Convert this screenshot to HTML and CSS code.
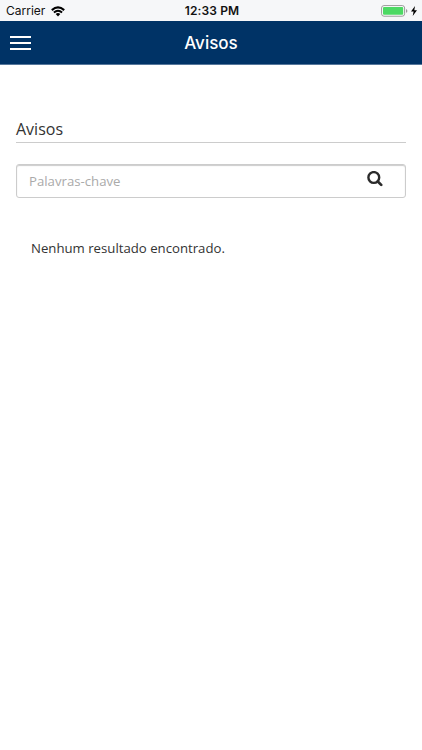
FILE: index.html
```html
<!DOCTYPE html>
<html lang="pt-BR">
<head>
  <meta charset="UTF-8" />
  <meta name="viewport" content="width=device-width, initial-scale=1.0"/>
  <title>Avisos</title>
  <link rel="stylesheet" href="styles.css">
</head>
<body>
  <div class="statusbar">
    <div class="carrier">
      <span>Carrier</span>
      <svg class="wifi" width="14" height="11" viewBox="0 0 14 11">
        <path d="M0.8 4.1 Q7 -1.3 13.2 4.1" fill="none" stroke="#000" stroke-width="2.1"/>
        <path d="M2.9 6.5 Q7 2.9 11.1 6.5" fill="none" stroke="#000" stroke-width="1.9"/>
        <path d="M4.7 8.1 Q7 6.1 9.3 8.1 L7 10.4 Z" fill="#000"/>
      </svg>
    </div>
    <span class="time">12:33 PM</span>
    <div class="power">
      <svg width="27" height="12" viewBox="0 0 27 12">
        <rect x="0.6" y="0.6" width="23" height="10.6" rx="2.4" fill="#fff" stroke="#999" stroke-width="1"/>
        <rect x="2" y="2" width="20.2" height="7.8" rx="1" fill="#4cd964"/>
        <path d="M25 4 Q26.4 4.5 26.4 5.9 Q26.4 7.3 25 7.8 Z" fill="#999"/>
      </svg>
      <svg width="6" height="10" viewBox="0 0 6 10">
        <path d="M4 0 L0 5.5 H2.6 L1.7 10 L6 4.2 H3.3 Z" fill="#000"/>
      </svg>
    </div>
  </div>

  <header class="navbar">
    <button class="menu" aria-label="Menu">
      <span></span>
      <span></span>
      <span></span>
    </button>
    <h1>Avisos</h1>
  </header>

  <main class="content">
    <h2>Avisos</h2>
    <form class="search">
      <input type="text" placeholder="Palavras-chave" />
      <button type="button" class="search-btn" aria-label="Buscar">
        <svg width="16" height="16" viewBox="0 0 16 16">
          <circle cx="6.8" cy="6.5" r="5.4" fill="none" stroke="#2b2b2b" stroke-width="2.4"/>
          <path d="M10.8 10.5 L14.2 13.9" stroke="#2b2b2b" stroke-width="2.7" stroke-linecap="round"/>
        </svg>
      </button>
    </form>
    <p class="empty">Nenhum resultado encontrado.</p>
  </main>
</body>
</html>
```
FILE: styles.css
```css
* {
  box-sizing: border-box;
}
body {
  margin: 0;
  background-color: #fff;
  color: #333;
  font-family: 'Open Sans', sans-serif;
}
button {
  padding: 0;
  border: none;
  background: none;
  cursor: pointer;
}
.statusbar {
  display: grid;
  grid-template-columns: 1fr auto 1fr;
  align-items: center;
  height: 21px;
  padding: 1px 5px 0 6px;
  background: #f6f7f9;
  color: #111;
  font-family: Inter, sans-serif;
  font-size: 12px;
  line-height: 20px;
}
.carrier {
  display: flex;
  align-items: center;
  gap: 6px;
}
.time {
  padding-left: 1px;
  font-weight: 600;
  letter-spacing: 0.15px;
}
.power {
  display: flex;
  align-items: center;
  justify-content: flex-end;
  gap: 3px;
}
.navbar {
  display: grid;
  grid-template-columns: 21px 1fr 21px;
  align-items: center;
  height: 44px;
  padding: 0 10px;
  background: #003366;
  border-bottom: 1px solid #56779b;
}
.menu {
  display: flex;
  flex-direction: column;
  gap: 4px;
}
.menu span {
  width: 21px;
  height: 2px;
  background: #fff;
}
.navbar h1 {
  margin: 0;
  color: #fff;
  font-family: Inter, sans-serif;
  font-size: 17px;
  font-weight: 500;
  text-align: center;
}
.content {
  padding: 52px 16px 0;
}
.content h2 {
  height: 26px;
  margin: 0 0 21px;
  border-bottom: 1px solid #ccc;
  font-size: 16px;
  font-weight: 400;
  line-height: 24px;
}
.search {
  display: flex;
  height: 34px;
  border: 1px solid #ccc;
  border-radius: 3px;
  box-shadow: inset 0 1px 1px #ccc;
}
.search input {
  flex: 1;
  min-width: 0;
  padding: 0 12px 1px;
  border: none;
  background: none;
  color: #333;
  font-family: 'Open Sans', sans-serif;
  font-size: 13.2px;
  outline: none;
}
.search input::placeholder {
  color: #aaa;
}
.search-btn {
  width: 38px;
  padding: 0 0 4px;
  text-align: left;
}
.search-btn svg {
  display: block;
}
.empty {
  margin: 40px 15px 0;
  font-size: 13.2px;
  line-height: 20px;
}
```
